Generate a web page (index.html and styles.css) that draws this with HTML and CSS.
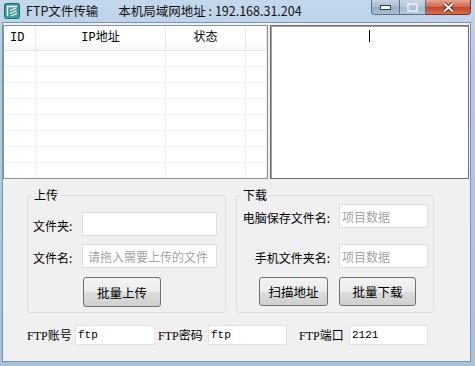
FILE: index.html
```html
<!DOCTYPE html>
<html>
<head>
    <title>FTP文件传输</title>
    <link rel="stylesheet" href="styles.css">
</head>
<body>
    <div class="window">
        <div class="titlebar">
            <svg class="app-icon" viewBox="0 0 16 16">
                <rect x="0.5" y="0.5" width="15" height="15" rx="2" fill="#3a9d9b" stroke="#1f6a6a"/>
                <path d="M3 3.5h10M3.5 3.5v9.5" stroke="#fff" stroke-width="1.4" fill="none"/>
                <path d="M6 7.5q3 -1 6 -2.5M6 10.5q3 -1 6.5 -3M7 13q3 -1 6 -3" stroke="#fff" stroke-width="1.3" fill="none"/>
            </svg>
            <span class="caption">FTP文件传输</span>
            <span class="caption caption-ip">本机局域网地址 : 192.168.31.204</span>
            <div class="controls">
                <div class="ctl ctl-min">
                    <svg width="11" height="5" viewBox="0 0 11 5"><rect x="0.5" y="0.5" width="10" height="4" fill="#fff" stroke="#2c3e52"/></svg>
                </div>
                <div class="ctl ctl-max">
                    <svg width="11" height="9" viewBox="0 0 11 9"><rect x="1" y="1" width="9" height="7" fill="none" stroke="#e8eef4" stroke-width="2"/></svg>
                </div>
                <div class="ctl ctl-close">
                    <svg width="13" height="11" viewBox="0 0 13 11"><path d="M2 1.5l9 8M11 1.5l-9 8" stroke="#3a1410" stroke-width="3.6"/><path d="M2 1.5l9 8M11 1.5l-9 8" stroke="#fff" stroke-width="2"/></svg>
                </div>
            </div>
        </div>

        <div class="client">
            <div class="top-row">
                <div class="listview">
                    <div class="lv-row lv-head">
                        <div class="cell cell-id">ID</div>
                        <div class="cell cell-center">IP地址</div>
                        <div class="cell cell-center">状态</div>
                        <div class="cell"></div>
                    </div>
                    <div class="lv-row"><div class="cell"></div><div class="cell"></div><div class="cell"></div><div class="cell"></div></div>
                    <div class="lv-row"><div class="cell"></div><div class="cell"></div><div class="cell"></div><div class="cell"></div></div>
                    <div class="lv-row"><div class="cell"></div><div class="cell"></div><div class="cell"></div><div class="cell"></div></div>
                    <div class="lv-row"><div class="cell"></div><div class="cell"></div><div class="cell"></div><div class="cell"></div></div>
                    <div class="lv-row"><div class="cell"></div><div class="cell"></div><div class="cell"></div><div class="cell"></div></div>
                    <div class="lv-row"><div class="cell"></div><div class="cell"></div><div class="cell"></div><div class="cell"></div></div>
                    <div class="lv-row"><div class="cell"></div><div class="cell"></div><div class="cell"></div><div class="cell"></div></div>
                    <div class="lv-row"><div class="cell"></div><div class="cell"></div><div class="cell"></div><div class="cell"></div></div>
                </div>
                <div class="log"><span class="caret"></span></div>
            </div>

            <div class="groups">
                <fieldset class="group group-upload">
                    <legend>上传</legend>
                    <div class="group-body">
                        <div class="field">
                            <label class="lbl">文件夹:</label>
                            <input type="text" class="txt txt-wide">
                        </div>
                        <div class="field field-second">
                            <label class="lbl">文件名:</label>
                            <input type="text" class="txt txt-wide" placeholder="请拖入需要上传的文件">
                        </div>
                        <button class="btn btn-upload">批量上传</button>
                    </div>
                </fieldset>

                <fieldset class="group group-download">
                    <legend>下载</legend>
                    <div class="group-body">
                        <div class="field">
                            <label class="lbl">电脑保存文件名:</label>
                            <input type="text" class="txt txt-short" placeholder="项目数据">
                        </div>
                        <div class="field field-second">
                            <label class="lbl">手机文件夹名:</label>
                            <input type="text" class="txt txt-short" placeholder="项目数据">
                        </div>
                        <div class="buttons">
                            <button class="btn btn-scan">扫描地址</button>
                            <button class="btn btn-download">批量下载</button>
                        </div>
                    </div>
                </fieldset>
            </div>

            <div class="account-row">
                <label class="acc-lbl">FTP账号</label>
                <input type="text" class="acc-txt" value="ftp">
                <label class="acc-lbl acc-pass">FTP密码</label>
                <input type="text" class="acc-txt" value="ftp">
                <label class="acc-lbl acc-port">FTP端口</label>
                <input type="text" class="acc-txt" value="2121">
            </div>
        </div>
    </div>
</body>
</html>
```

FILE: styles.css
```css
body {
    margin: 0;
    font-family: "Noto Sans CJK SC", sans-serif;
    font-size: 12px;
    color: #000;
}

.window {
    width: 475px;
    height: 366px;
    box-sizing: border-box;
    padding: 0 4px 4px 2px;
    display: flex;
    flex-direction: column;
    background: linear-gradient(#c4d8ec, #b2cae3 60px, #a9c2dc);
}

/* title bar */

.titlebar {
    height: 22px;
    display: flex;
    align-items: flex-start;
}

.app-icon {
    width: 16px;
    height: 16px;
    margin: 3px 6px 0 2px;
}

.caption {
    font-size: 12.5px;
    line-height: 21px;
    color: #111;
}

.caption-ip {
    margin-left: 20px;
}

.controls {
    margin-left: auto;
    display: flex;
}

.ctl {
    height: 15px;
    box-sizing: border-box;
    border: 1px solid #5b6f86;
    border-top: none;
    display: flex;
    align-items: center;
    justify-content: center;
}

.ctl-min {
    width: 28px;
    border-radius: 0 0 0 4px;
    border-right: none;
    background: linear-gradient(#c4d3e2, #a7bbd0 50%, #95acc3 51%, #a9bed3);
}

.ctl-max {
    width: 27px;
    background: linear-gradient(#cad8e5, #b5c7d8 50%, #a7bbce 51%, #b7c9db);
}

.ctl-max svg {
    opacity: 0.8;
}

.ctl-close {
    width: 45px;
    border-left: none;
    border-color: #6b3a36;
    border-radius: 0 0 4px 0;
    background: linear-gradient(#e5a592, #d0634c 50%, #c2412b 51%, #d5704f);
}

/* client area */

.client {
    flex: 1;
    background: #f0f0f0;
    border: 1px solid #7d93aa;
    padding-top: 2px;
    display: flex;
    flex-direction: column;
}

.top-row {
    display: flex;
    gap: 2px;
    height: 154px;
}

.listview {
    width: 265px;
    box-sizing: border-box;
    border: 1px solid #8a8f96;
    background: #fff;
    overflow: hidden;
}

.lv-row {
    display: grid;
    grid-template-columns: 32px 130px 80px 1fr;
    height: 16px;
    box-sizing: border-box;
    border-bottom: 1px solid #f0f0f0;
}

.lv-row .cell {
    border-right: 1px solid #f0f0f0;
}

.lv-head {
    height: 25px;
    border-bottom: 1px solid #e5e5e5;
    background: linear-gradient(#fff, #fff 60%, #f7f8f9);
    font-family: "Liberation Mono", "Noto Sans CJK SC", monospace;
    font-size: 12px;
    line-height: 24px;
}

.lv-head .cell {
    border-right: 1px solid #e5e8ec;
}

.cell-id {
    padding-left: 6px;
}

.cell-center {
    text-align: center;
}

.log {
    width: 199px;
    box-sizing: border-box;
    border: 1px solid #6e6e6e;
    box-shadow: inset 1px 1px 0 #a0a0a0;
    background: #fff;
    text-align: center;
    padding-top: 2px;
}

.caret {
    display: inline-block;
    width: 1px;
    height: 12px;
    background: #000;
}

/* groups */

.groups {
    display: flex;
    gap: 10px;
    margin: 8px 0 0 24px;
}

.group {
    margin: 0;
    padding: 0;
    min-width: 0;
    height: 126px;
    box-sizing: border-box;
    border: 1px solid #d5dfe5;
    border-radius: 3px;
}

.group-upload {
    width: 199px;
}

.group-download {
    width: 198px;
}

.group legend {
    margin-left: 4px;
    padding: 0 2px;
    line-height: 16px;
}

.group-upload .group-body {
    padding: 9px 0 0 5px;
}

.group-download .group-body {
    padding-top: 1px;
}

.field {
    display: flex;
    align-items: center;
    height: 24px;
}

.field-second {
    margin-top: 8px;
}

.group-download .field-second {
    margin-top: 16px;
}

.lbl {
    line-height: 16px;
    padding-top: 3px;
}

.group-upload .lbl {
    width: 49px;
}

.group-download .lbl {
    width: 102px;
    box-sizing: border-box;
    padding-right: 9px;
    text-align: right;
}

.txt {
    height: 24px;
    box-sizing: border-box;
    border: 1px solid #dedede;
    background: #fff;
    font-family: "Noto Sans CJK SC", sans-serif;
    font-size: 12px;
    outline: none;
}

.txt::placeholder {
    color: #a3a3a3;
}

.txt-wide {
    width: 135px;
    padding: 0 5px;
}

.txt-short {
    width: 89px;
    padding: 0 2px;
}

.btn {
    height: 30px;
    padding: 0;
    border: 1px solid #707070;
    border-radius: 3px;
    background: linear-gradient(#f3f3f3, #ebebeb 50%, #dddddd 51%, #cfcfcf);
    font-family: "Noto Sans CJK SC", sans-serif;
    font-size: 12.5px;
    color: #000;
}

.btn-upload {
    display: block;
    width: 78px;
    margin: 9px 0 0 50px;
}

.buttons {
    display: flex;
    gap: 11px;
    margin: 9px 0 0 22px;
}

.btn-scan {
    width: 69px;
    height: 29px;
}

.btn-download {
    width: 77px;
    height: 29px;
}

/* account row */

.account-row {
    display: flex;
    align-items: center;
    height: 20px;
    margin: 12px 0 0 24px;
}

.acc-lbl {
    width: 48px;
    font-family: "Liberation Serif", "Noto Sans CJK SC", serif;
    font-size: 12px;
    line-height: 16px;
    padding-top: 2px;
}

.acc-pass {
    width: 50px;
    margin-left: 3px;
}

.acc-port {
    width: 50px;
    margin-left: 12px;
}

.acc-txt {
    width: 80px;
    height: 20px;
    box-sizing: border-box;
    border: 1px solid #e2e2e2;
    background: #fff;
    padding: 0 2px;
    font-family: "Liberation Mono", monospace;
    font-size: 11px;
    outline: none;
}

.acc-txt + .acc-lbl ~ .acc-txt {
    width: 79px;
}
```
